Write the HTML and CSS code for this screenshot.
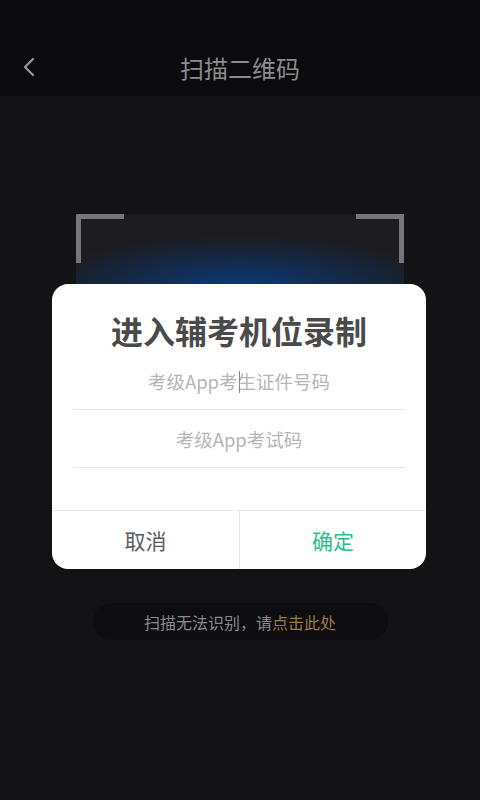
FILE: index.html
```html
<!DOCTYPE html>
<html lang="zh-CN">
  <head>
    <meta charset="UTF-8" />
    <meta name="viewport" content="width=device-width, initial-scale=1.0" />
    <title>扫描二维码</title>
    <link rel="stylesheet" href="styles.css">
  </head>
  <body>
    <div class="topBar">
      <button class="backBtn">
        <svg width="14" height="20" viewBox="0 0 14 20">
          <path d="M11 2 L3 10 L11 18" fill="none" stroke="#9a9a9a" stroke-width="2.2" stroke-linecap="round" stroke-linejoin="round"/>
        </svg>
      </button>
      <h1>扫描二维码</h1>
    </div>

    <div class="scanCont">
      <div class="scanBox">
        <span class="corner tl"></span>
        <span class="corner tr"></span>
        <span class="corner bl"></span>
        <span class="corner br"></span>
        <div class="scanLine"></div>
      </div>
      <div class="tip">扫描无法识别，请<span>点击此处</span></div>
    </div>

    <div class="dialog">
      <h2>进入辅考机位录制</h2>
      <div class="field caret">
        <input type="text" placeholder="考级App考生证件号码" />
      </div>
      <div class="field">
        <input type="text" placeholder="考级App考试码" />
      </div>
      <div class="btns">
        <button class="btn cancel">取消</button>
        <button class="btn ok">确定</button>
      </div>
    </div>
  </body>
</html>
```

FILE: styles.css
```css
* {
  margin: 0;
  padding: 0;
  box-sizing: border-box;
  font-family: "Noto Sans CJK SC", "Noto Sans", sans-serif;
}
body {
  width: 480px;
  height: 800px;
  overflow: hidden;
  background-color: #131215;
}
.topBar {
  height: 96px;
  padding-top: 38px;
  background-color: #0b0a0f;
  display: flex;
  align-items: center;
  justify-content: center;
  position: relative;
}
.topBar h1 {
  font-size: 24px;
  font-weight: 400;
  color: #8c8c8c;
}
.backBtn {
  position: absolute;
  left: 22px;
  top: 57px;
  width: 16px;
  height: 20px;
  background: none;
  border: none;
  display: flex;
}
.scanCont {
  display: flex;
  flex-direction: column;
  align-items: center;
  padding-top: 118px;
}
.scanBox {
  width: 328px;
  height: 328px;
  position: relative;
  background-color: #1c1c20;
  overflow: hidden;
}
.scanLine {
  position: absolute;
  left: 0;
  right: 0;
  top: 22px;
  height: 50px;
  background: radial-gradient(ellipse 62% 100% at 50% 100%, #0b3a7a 0%, rgba(11, 56, 118, 0.6) 40%, rgba(28, 28, 32, 0) 100%);
}
.corner {
  position: absolute;
  width: 48px;
  height: 49px;
  border-color: #777779;
  border-style: solid;
  border-width: 0;
  z-index: 2;
}
.tl {
  left: 0;
  top: 0;
  border-left-width: 5px;
  border-top-width: 5px;
  border-radius: 2px 0 0 0;
}
.tr {
  right: 0;
  top: 0;
  border-right-width: 5px;
  border-top-width: 5px;
}
.bl {
  left: 0;
  bottom: 0;
  border-left-width: 5px;
  border-bottom-width: 5px;
}
.br {
  right: 0;
  bottom: 0;
  border-right-width: 5px;
  border-bottom-width: 5px;
}
.tip {
  margin-top: 61px;
  width: 295px;
  height: 37px;
  border-radius: 19px;
  background-color: #0d0c10;
  color: #8a8a8a;
  font-size: 16px;
  display: flex;
  align-items: center;
  justify-content: center;
}
.tip span {
  color: #9a7a45;
}

/* modal */
.dialog {
  position: absolute;
  left: 52px;
  top: 284px;
  width: 374px;
  background-color: #fff;
  border-radius: 16px;
  overflow: hidden;
  z-index: 10;
}
.dialog h2 {
  padding-top: 26px;
  line-height: 40px;
  height: 68px;
  text-align: center;
  font-size: 32px;
  font-weight: 700;
  color: #4a4a4a;
}
.field {
  margin: 0 21px;
  height: 58px;
  border-bottom: 1px solid #e6e6e6;
  display: flex;
  align-items: center;
  position: relative;
}
.field input {
  width: 100%;
  border: none;
  outline: none;
  background: none;
  text-align: center;
  font-size: 18.5px;
  color: #333;
}
.field input::placeholder {
  color: #b5b5b5;
}
.caret::after {
  content: "";
  position: absolute;
  left: 166px;
  top: 19px;
  width: 1px;
  height: 22px;
  background-color: #8a8a8a;
}
.btns {
  margin-top: 42px;
  display: flex;
  border-top: 1px solid #e8e8e8;
}
.btn {
  flex: 1;
  height: 58px;
  background: none;
  border: none;
  font-size: 21px;
  cursor: pointer;
}
.cancel {
  color: #5a5a5a;
  border-right: 1px solid #e8e8e8;
  flex: 0 0 188px;
}
.ok {
  color: #26c08a;
}
```
